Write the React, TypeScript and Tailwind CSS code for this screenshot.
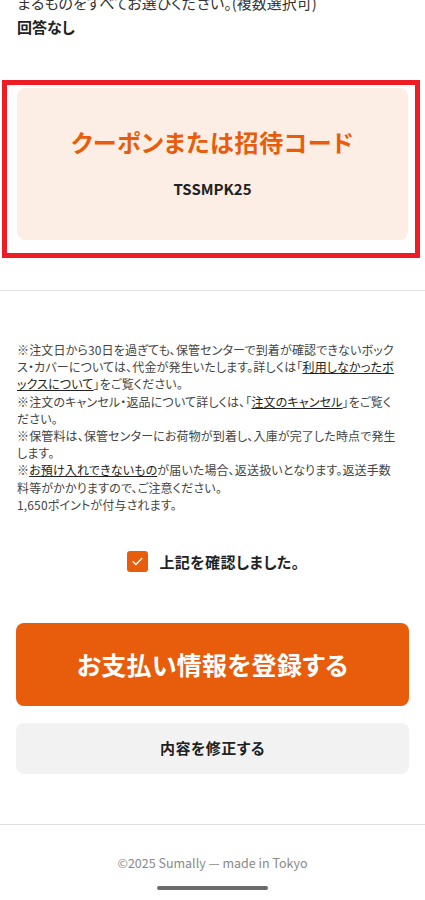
import React from "react";

export default function App() {
  return (
    <div
      className="relative w-full h-[900px] overflow-hidden bg-white text-[#333] [font-feature-settings:'palt']"
      style={{ fontFamily: "'Noto Sans CJK JP', 'Noto Sans', sans-serif" }}
    >
      <div className="px-[17px]">
        <p className="mt-[-9px] text-[15px] leading-[24px] text-[#333] whitespace-nowrap">
          まるものをすべてお選びください。(複数選択可)
        </p>
        <p className="text-[15px] leading-[24px] font-bold text-[#222]">回答なし</p>

        <div className="relative mt-[49px]">
          <div className="rounded-[8px] bg-[#fdeee5] pt-[38px] pb-[40px] flex flex-col items-center">
            <p className="text-[24px] leading-[32px] font-bold tracking-[0.75px] text-[#e85d0c]">
              クーポンまたは招待コード
            </p>
            <p className="mt-[20px] text-[15px] leading-[22px] font-bold text-[#222]">TSSMPK25</p>
          </div>
          <div className="pointer-events-none absolute left-[-15px] top-[-8px] right-[-12px] bottom-[-18px] border-[5px] border-[#ee1c25]" />
        </div>
      </div>

      <div className="mt-[50px] h-px bg-[#e2e2e2]" />

      <div className="px-[17px] mt-[50px] text-[12px] leading-[17.2px] tracking-[0.15px] text-[#444] whitespace-nowrap">
        <p>※注文日から30日を過ぎても、保管センターで到着が確認できないボック</p>
        <p>
          ス・カバーについては、代金が発生いたします。詳しくは「
          <span className="underline text-[#222]">利用しなかったボ</span>
        </p>
        <p>
          <span className="underline text-[#222]">ックスについて</span>」をご覧ください。
        </p>
        <p>
          ※注文のキャンセル・返品について詳しくは、「
          <span className="underline text-[#222]">注文のキャンセル</span>」をご覧く
        </p>
        <p>ださい。</p>
        <p>※保管料は、保管センターにお荷物が到着し、入庫が完了した時点で発生</p>
        <p>します。</p>
        <p>
          ※<span className="underline text-[#222]">お預け入れできないもの</span>
          が届いた場合、返送扱いとなります。返送手数
        </p>
        <p>料等がかかりますので、ご注意ください。</p>
        <p>1,650ポイントが付与されます。</p>
      </div>

      <div className="mt-[38px] flex items-center justify-center gap-[11px] pl-[2px]">
        <div className="w-[21px] h-[21px] rounded-[3px] bg-[#e85d0c] flex items-center justify-center">
          <svg width="13" height="13" viewBox="0 0 24 24" fill="none" stroke="white" strokeWidth="2.6" strokeLinecap="round" strokeLinejoin="round">
            <path d="M4 12.5l5 5L20 6.5" />
          </svg>
        </div>
        <span className="text-[15px] leading-[21px] font-bold tracking-[0.4px] text-[#222]">上記を確認しました。</span>
      </div>

      <div className="px-[16px]">
        <button className="mt-[51px] w-full h-[83px] rounded-[8px] bg-[#e85d0c] text-white text-[25px] tracking-[0.3px] font-bold flex items-center justify-center">
          お支払い情報を登録する
        </button>
        <button className="mt-[17px] w-full h-[51px] rounded-[8px] bg-[#f2f2f2] text-[#222] text-[15px] tracking-[0.5px] font-bold flex items-center justify-center">
          内容を修正する
        </button>
      </div>

      <div className="mt-[50px] h-px bg-[#e2e2e2]" />

      <p className="mt-[28px] text-center text-[12.5px] leading-[20px] text-[#888]">
        ©2025 Sumally — made in Tokyo
      </p>
      <div className="mt-[13px] mx-auto w-[111px] h-[4px] rounded-full bg-[#6b6b6b]" />
    </div>
  );
}
